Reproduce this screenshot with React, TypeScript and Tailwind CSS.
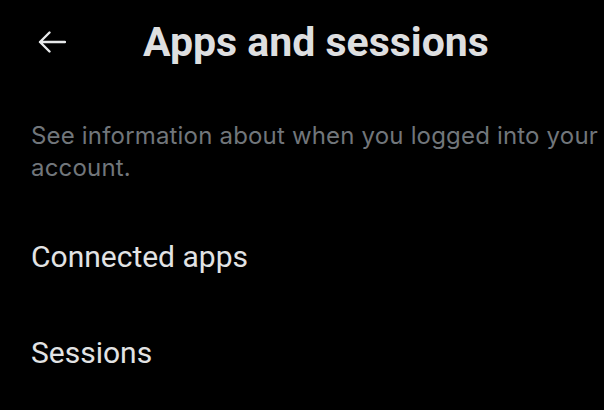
import React from "react";

const BackArrow = () => (
  <svg width="28" height="22" viewBox="0 0 28 22" fill="none" className="text-[#e7e9ea]">
    <path
      d="M27 11H2M11.5 1.5L2 11l9.5 9.5"
      stroke="currentColor"
      strokeWidth="2.4"
      strokeLinecap="round"
      strokeLinejoin="round"
    />
  </svg>
);

const rows = ["Connected apps", "Sessions"];

const App = () => {
  return (
    <div className="w-[604px] h-[410px] bg-black overflow-hidden font-['Roboto','Liberation_Sans',sans-serif]">
      <div className="flex items-center h-[48px] mt-[18px] pl-[38px]">
        <button className="flex items-center justify-center w-[28px] h-[22px]">
          <BackArrow />
        </button>
        <h1 className="ml-[77px] text-[41px] leading-[48px] font-bold text-[#dedfe0] whitespace-nowrap">
          Apps and sessions
        </h1>
      </div>
      <p className="mt-[54px] pl-[31px] w-[640px] font-['Inter','Roboto',sans-serif] text-[24px] leading-[32px] tracking-[0.18px] text-[#71767b]">
        See information about when you logged into your account.
      </p>
      <div className="flex flex-col mt-[55px] gap-[60px] pl-[31px]">
        {rows.map((r) => (
          <div key={r} className="text-[30px] leading-[36px] text-[#e2e3e4]">
            {r}
          </div>
        ))}
      </div>
    </div>
  );
};

export default App;
